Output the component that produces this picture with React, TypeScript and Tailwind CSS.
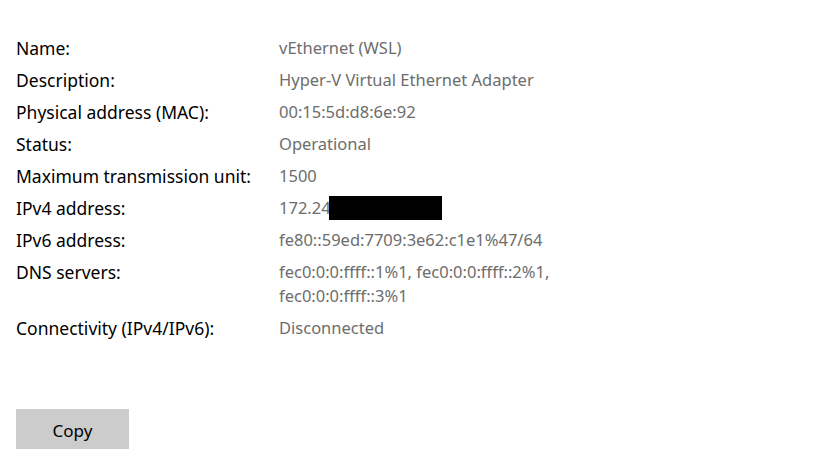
import React from 'react';

const rows: { label: string; value: React.ReactNode }[] = [
  { label: 'Name:', value: 'vEthernet (WSL)' },
  { label: 'Description:', value: 'Hyper-V Virtual Ethernet Adapter' },
  { label: 'Physical address (MAC):', value: '00:15:5d:d8:6e:92' },
  { label: 'Status:', value: 'Operational' },
  { label: 'Maximum transmission unit:', value: '1500' },
  {
    label: 'IPv4 address:',
    value: (
      <span className="flex items-center">
        172.24
        <span className="inline-block -ml-[2px] w-[113px] h-[24px] bg-black" />
      </span>
    ),
  },
  { label: 'IPv6 address:', value: 'fe80::59ed:7709:3e62:c1e1%47/64' },
  {
    label: 'DNS servers:',
    value: (
      <>
        fec0:0:0:ffff::1%1, fec0:0:0:ffff::2%1,
        <br />
        fec0:0:0:ffff::3%1
      </>
    ),
  },
  { label: 'Connectivity (IPv4/IPv6):', value: 'Disconnected' },
];

export default function App() {
  return (
    <div
      className="w-[836px] h-[460px] bg-white px-4 pt-[36px] leading-[24px]"
      style={{ fontFamily: '"Segoe UI", "Noto Sans", sans-serif' }}
    >
      <div className="flex flex-col gap-2">
        {rows.map((r) => (
          <div key={r.label} className="flex">
            <div className="w-[263px] shrink-0 text-black text-[17.5px]">{r.label}</div>
            <div className="text-[#6d6d6d] text-[16.5px]">{r.value}</div>
          </div>
        ))}
      </div>
      <button className="mt-[69px] w-[113px] h-[40px] pt-[3px] bg-[#cccccc] text-black text-[17px]">
        Copy
      </button>
    </div>
  );
}
